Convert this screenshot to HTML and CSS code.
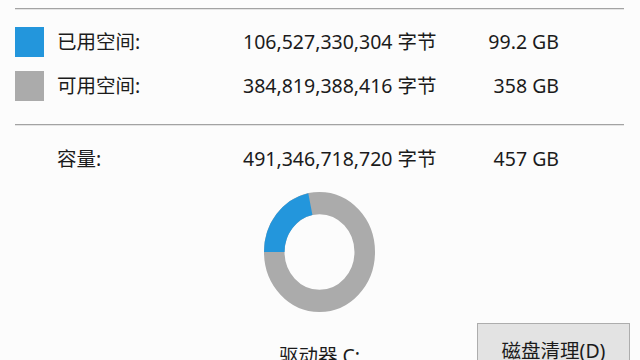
FILE: index.html
```html
<!DOCTYPE html>
<html lang="zh-CN">
<head>
<meta charset="utf-8">
<title>磁盘属性</title>
<link rel="stylesheet" href="styles.css">
</head>
<body>
<div class="panel">
  <div class="sep"></div>
  <div class="rows">
    <div class="row">
      <span class="swatch used"></span>
      <span class="label">已用空间:</span>
      <span class="bytes">106,527,330,304 字节</span>
      <span class="size">99.2 GB</span>
    </div>
    <div class="row">
      <span class="swatch free"></span>
      <span class="label">可用空间:</span>
      <span class="bytes">384,819,388,416 字节</span>
      <span class="size">358 GB</span>
    </div>
  </div>
  <div class="sep sep-mid"></div>
  <div class="row">
    <span class="swatch-empty"></span>
    <span class="label">容量:</span>
    <span class="bytes">491,346,718,720 字节</span>
    <span class="size">457 GB</span>
  </div>
  <div class="chart">
    <svg class="donut" viewBox="0 0 100 100" preserveAspectRatio="none" aria-hidden="true">
      <circle cx="50" cy="50" r="40.75" fill="none" stroke="#ababab" stroke-width="18.5"/>
      <circle cx="50" cy="50" r="40.75" fill="none" stroke="#2396dc" stroke-width="18.5"
        stroke-dasharray="55.6 300" transform="rotate(180 50 50)"/>
    </svg>
  </div>
  <div class="bottom">
    <span class="spacer"></span>
    <span class="drive">驱动器 C:</span>
    <button class="cleanup" type="button">磁盘清理(D)</button>
  </div>
</div>
</body>
</html>
```

FILE: styles.css
```css
html, body {
  margin: 0;
  padding: 0;
}
body {
  width: 640px;
  height: 360px;
  overflow: hidden;
  background: #fcfcfc;
  color: #1b1b1b;
  font-family: "Noto Sans", "Noto Sans CJK SC", sans-serif;
  font-size: 19.5px;
}
.panel {
  padding: 8px 16px 0 15px;
}
.sep {
  height: 1px;
  background: #a3a3a3;
  box-shadow: 0 1px 0 #e4e4e4;
}
.rows {
  padding-top: 11px;
}
.sep-mid {
  margin-top: 16px;
  margin-bottom: 12px;
}
.row {
  display: grid;
  grid-template-columns: 42px 186px 200px 116px;
  align-items: center;
  height: 44px;
  line-height: 26px;
}
.swatch {
  width: 29px;
  height: 30px;
  display: block;
}
.swatch.used { background: #2396dc; }
.swatch.free { background: #ababab; }
.swatch-empty { display: block; }
.label, .bytes { white-space: nowrap; }
.size {
  text-align: right;
  white-space: nowrap;
}
.chart {
  display: flex;
  justify-content: center;
  margin-top: 11px;
}
.donut {
  width: 111px;
  height: 120px;
  display: block;
}
.bottom {
  display: grid;
  grid-template-columns: 1fr auto 1fr;
  align-items: start;
  margin-top: 11px;
}
.drive {
  padding-top: 20px;
  line-height: 26px;
  white-space: nowrap;
}
.cleanup {
  justify-self: end;
  margin-right: -6px;
  width: 153px;
  height: 44px;
  padding: 10px 0 0;
  align-self: start;
  display: block;
  background: #e3e3e3;
  border: 1px solid #adadad;
  font: inherit;
  color: #1b1b1b;
  line-height: 25px;
  text-align: center;
  vertical-align: top;
}
```
